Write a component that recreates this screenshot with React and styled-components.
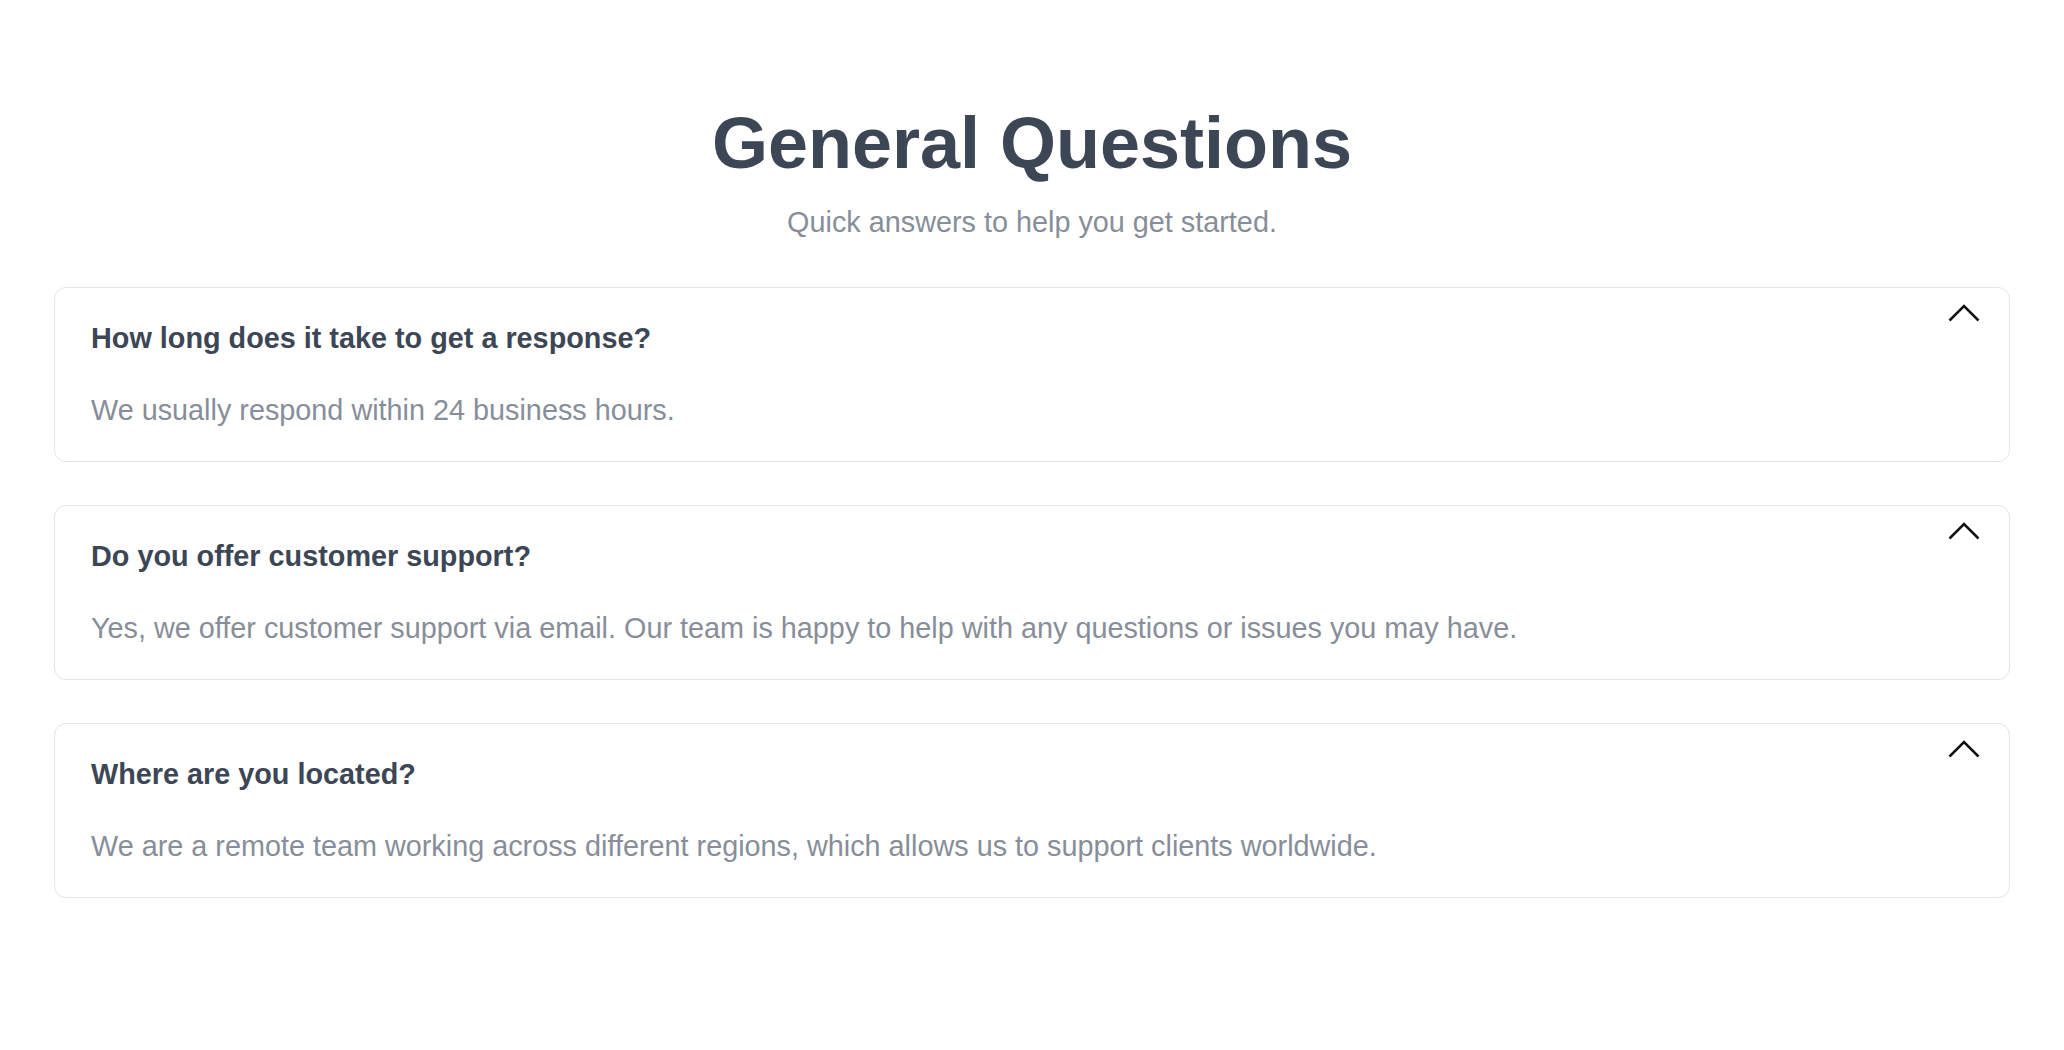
import React, { useState } from "react";
import styled, { createGlobalStyle } from "styled-components";

const GlobalStyle = createGlobalStyle`
  html, body {
    margin: 0;
    padding: 0;
    background: #ffffff;
  }
  body {
    font-family: "Liberation Sans", Arial, Helvetica, sans-serif;
  }
`;

const faqs = [
  {
    question: "How long does it take to get a response?",
    answer: "We usually respond within 24 business hours.",
  },
  {
    question: "Do you offer customer support?",
    answer:
      "Yes, we offer customer support via email. Our team is happy to help with any questions or issues you may have.",
  },
  {
    question: "Where are you located?",
    answer:
      "We are a remote team working across different regions, which allows us to support clients worldwide.",
  },
];

const Page = styled.section`
  padding: 100px 54px 80px;
  box-sizing: border-box;
`;

const Header = styled.header`
  display: flex;
  flex-direction: column;
  align-items: center;
  gap: 14.6px;
  margin-bottom: 42.8px;
`;

const Title = styled.h1`
  margin: 0;
  font-size: 72px;
  line-height: 1.2;
  font-weight: 700;
  color: #3c4655;
`;

const Subtitle = styled.p`
  margin: 0;
  font-size: 28.8px;
  line-height: 1.5;
  color: #878e99;
`;

const List = styled.div`
  display: flex;
  flex-direction: column;
  gap: 43.2px;
`;

const Card = styled.div`
  position: relative;
  display: flex;
  flex-direction: column;
  gap: 28.8px;
  padding: 28.8px 36px;
  border: 1px solid #e3e5e8;
  border-radius: 12px;
  background: #fff;
`;

const Question = styled.h3`
  margin: 0;
  font-size: 28.8px;
  line-height: 1.5;
  font-weight: 700;
  color: #3c4655;
`;

const Answer = styled.p`
  margin: 0;
  font-size: 28.8px;
  line-height: 1.5;
  color: #878e99;
`;

const Toggle = styled.button`
  position: absolute;
  top: 16px;
  right: 29px;
  padding: 0;
  border: none;
  background: none;
  cursor: pointer;
  line-height: 0;

  svg {
    transform: rotate(${(p) => (p.$open ? "0deg" : "180deg")});
  }
`;

const Chevron = () => (
  <svg width="32" height="18" viewBox="0 0 32 18" fill="none">
    <polyline
      points="1.5,16.5 16,2 30.5,16.5"
      stroke="#111"
      strokeWidth="2.5"
      strokeLinejoin="miter"
    />
  </svg>
);

const FaqItem = ({ question, answer }) => {
  const [open, setOpen] = useState(true);
  return (
    <Card>
      <Question>{question}</Question>
      {open && <Answer>{answer}</Answer>}
      <Toggle $open={open} onClick={() => setOpen(!open)} aria-label="toggle">
        <Chevron />
      </Toggle>
    </Card>
  );
};

export default function App() {
  return (
    <>
      <GlobalStyle />
      <Page>
        <Header>
          <Title>General Questions</Title>
          <Subtitle>Quick answers to help you get started.</Subtitle>
        </Header>
        <List>
          {faqs.map((f) => (
            <FaqItem key={f.question} question={f.question} answer={f.answer} />
          ))}
        </List>
      </Page>
    </>
  );
}
